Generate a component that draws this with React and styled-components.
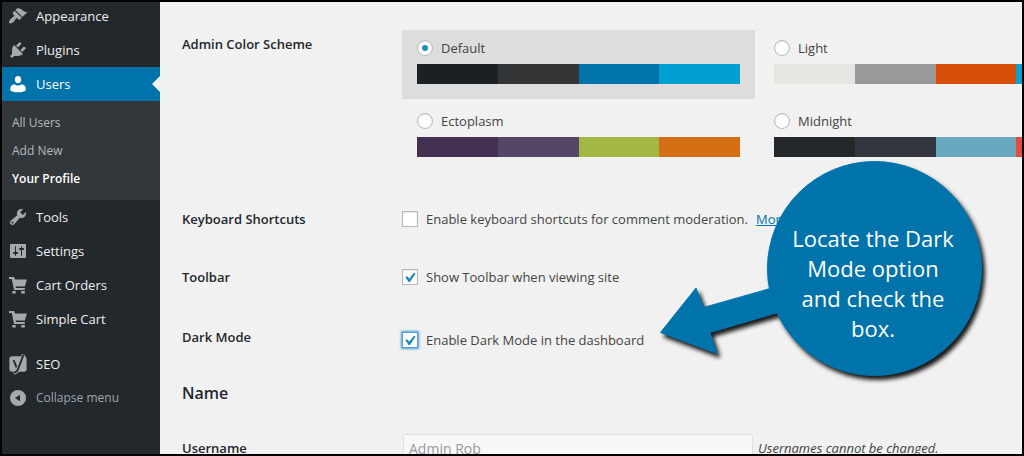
import React from "react";
import styled, { createGlobalStyle, css } from "styled-components";

const GlobalStyle = createGlobalStyle`
  *, *::before, *::after { box-sizing: border-box; }
  body {
    margin: 0;
    background: #f1f1f1;
    color: #444;
    font: 13px/18px "Open Sans", "Noto Sans", sans-serif;
  }
`;

const Frame = styled.div`
  display: flex;
  height: 100vh;
  border: 2px solid #000;
  overflow: hidden;
`;

const Sidebar = styled.nav`
  flex: 0 0 158px;
  background: #23282d;
`;

/* The menu is scrolled, so its first row starts above the frame. */
const Menu = styled.ul`
  margin: -3px 0 0;
  padding: 0;
  list-style: none;
`;

const MenuItem = styled.li`
  margin-top: ${(p) => (p.$separated ? "11px" : "0")};
`;

const MenuLink = styled.a`
  position: relative;
  display: flex;
  align-items: center;
  gap: 8px;
  height: 34px;
  padding-left: 6px;
  font-size: 13px;
  color: ${(p) => (p.$current ? "#fff" : "#eee")};
  background: ${(p) => (p.$current ? "#0073aa" : "transparent")};
  text-decoration: none;

  svg { fill: ${(p) => (p.$current ? "#fff" : "#a5a8ac")}; }

  ${(p) =>
    p.$current &&
    css`
      &::after {
        content: "";
        position: absolute;
        right: 0;
        top: 9px;
        border: 8px solid transparent;
        border-left: 0;
        border-right-color: #f1f1f1;
      }
    `}
`;

const CollapseButton = styled.button`
  display: flex;
  align-items: center;
  gap: 8px;
  width: 100%;
  height: 34px;
  padding: 0 0 0 6px;
  border: 0;
  background: none;
  color: #a0a5aa;
  font: inherit;
  font-size: 12px;
  svg { fill: #a5a8ac; }
`;

const Submenu = styled.ul`
  margin: 0;
  padding: 8px 0 7px;
  list-style: none;
  background: #32373c;
`;

const SubmenuLink = styled.a`
  display: block;
  padding: 5px 10px;
  font-size: 12px;
  line-height: 18px;
  color: ${(p) => (p.$current ? "#fff" : "#b4b9be")};
  font-weight: ${(p) => (p.$current ? 600 : 400)};
  text-decoration: none;
`;

const Main = styled.main`
  position: relative;
  flex: 1;
  min-width: 0;
  padding: 13px 0 0 22px;
  overflow: hidden;
`;

const Row = styled.div`
  display: grid;
  grid-template-columns: 220px 1fr;
  min-height: ${(p) => p.$height || "58px"};
`;

const RowTitle = styled.div`
  padding-top: 20px;
  color: #23282d;
  font-weight: 600;
`;

const SchemeGrid = styled.div`
  display: grid;
  grid-template-columns: repeat(2, 353px);
  gap: 4px;
  padding: 15px 0 18px;
`;

const SchemeOption = styled.label`
  display: block;
  height: 69px;
  padding: 9px 15px 0;
  background: ${(p) => (p.$selected ? "#ddd" : "transparent")};
`;

const SchemeName = styled.span`
  display: flex;
  align-items: center;
  gap: 8px;
  height: 18px;
`;

const Palette = styled.span`
  display: flex;
  height: 20px;
  margin-top: 7px;
`;

const Swatch = styled.span`
  flex: 1;
  background: ${(p) => p.$color};
`;

const Radio = styled.input.attrs({ type: "radio" })`
  appearance: none;
  display: grid;
  place-items: center;
  flex: none;
  width: 16px;
  height: 16px;
  margin: 0;
  border: 1px solid #b4b9be;
  border-radius: 50%;
  background: #fff;
  box-shadow: inset 0 1px 2px rgba(0, 0, 0, 0.1);
  &:checked::before {
    content: "";
    width: 6px;
    height: 6px;
    border-radius: 50%;
    background: #1e8cbe;
  }
`;

const CheckLabel = styled.label`
  display: flex;
  align-items: center;
  gap: 8px;
`;

const Field = styled.div`
  display: flex;
  align-items: center;
  gap: 8px;
  height: ${(p) => (p.$tall ? "24px" : "18px")};
  margin-top: 20px;
  white-space: nowrap;
`;

const Checkbox = styled.input.attrs({ type: "checkbox" })`
  appearance: none;
  display: block;
  flex: none;
  width: 16px;
  height: 16px;
  margin: 0;
  border: 1px solid ${(p) => (p.$focused ? "#5b9dd9" : "#b4b9be")};
  background: #fff;
  box-shadow: ${(p) =>
    p.$focused
      ? "0 0 2px 1px rgba(30, 140, 190, 0.8)"
      : "inset 0 1px 2px rgba(0, 0, 0, 0.1)"};
  &:checked::before {
    content: "";
    display: block;
    width: 14px;
    height: 14px;
    background: #1e8cbe;
    clip-path: polygon(79% 18%, 89% 26%, 50% 86%, 40% 86%, 18% 54%, 28% 43%, 45% 61%);
  }
`;

const MoreLink = styled.a`
  color: #0073aa;
`;

const SectionTitle = styled.h2`
  margin: 11px 0 16px;
  color: #23282d;
  font-size: 16px;
  line-height: 20px;
  font-weight: 600;
`;

const TextRow = styled.div`
  display: flex;
  align-items: center;
  gap: 5px;
  height: 28px;
  margin: 15px 0 0 1px;
`;

const TextInput = styled.input`
  width: 350px;
  height: 28px;
  padding: 3px 5px;
  border: 1px solid #e0e0e0;
  background: #f8f8f8;
  color: #989a9c;
  font: inherit;
  font-size: 14px;
`;

const Hint = styled.em`
  white-space: nowrap;
`;

/* Annotation that floats over the form. */
const Callout = styled.aside`
  position: absolute;
  left: 490px;
  top: 148px;
  width: 350px;
  height: 240px;
`;

const CalloutShape = styled.svg`
  display: block;
  filter: drop-shadow(3px 4px 2px rgba(0, 0, 0, 0.9));
`;

const CalloutText = styled.p`
  position: absolute;
  left: 138px;
  top: 73px;
  width: 170px;
  margin: 0;
  color: #fff;
  font-size: 22px;
  line-height: 30px;
  text-align: center;
`;

const paths = {
  appearance:
    "M14.48 11.06L7.41 3.99l1.5-1.5c.5-.56 2.3-.47 3.51.32 1.21.8 1.43 1.28 2.91 2.1 1.18.64 2.45 1.26 4.45.85zm-.71.71L6.7 4.7 4.93 6.47c-.39.39-.39 1.02 0 1.41l1.06 1.06c.39.39.39 1.03 0 1.42-.6.6-1.43 1.11-2.21 1.69-.35.26-.7.53-1.01.84C1.43 14.23.4 16.08 1.4 17.07c.99 1 2.84-.03 4.18-1.36.31-.31.58-.66.85-1.02.57-.78 1.08-1.61 1.69-2.21.39-.39 1.02-.39 1.41 0l1.06 1.06c.39.39 1.02.39 1.41 0z",
  plugins:
    "M13.11 4.36L9.87 7.6 8 5.73l3.24-3.24c.35-.34 1.05-.2 1.56.32.52.51.66 1.21.31 1.55zm-8 1.77l.91-1.12 9.01 9.01-1.19.84c-.71.71-2.63 1.16-3.82 1.16H6.14L4.9 17.26c-.59.59-1.54.59-2.12 0-.59-.58-.59-1.53 0-2.12l1.24-1.24v-3.88c0-1.13.4-3.19 1.09-3.89zm7.26 3.97l3.24-3.24c.34-.35 1.04-.21 1.55.31.52.51.66 1.21.31 1.55l-3.24 3.25z",
  users:
    "M10 9.300c-2.300 0-3.200-2-3.200-4C6.800 3.200 8.100 1.900 10 1.900s3.200 1.300 3.200 3.400c0 2-.9 4-3.200 4zM6.600 10.200c1 .9 2.100 1.300 3.400 1.300s2.400-.4 3.400-1.300c2.600.2 4.300 1.900 4.300 4.100v2.100c-2 1.300-4.700 1.900-7.700 1.900s-5.700-.6-7.700-1.900v-2.100c0-2.200 1.700-3.900 4.300-4.100z",
  tools:
    "M16.68 9.77c-1.34 1.34-3.3 1.67-4.95.99l-5.41 6.52c-.99.99-2.59.99-3.58 0s-.99-2.59 0-3.57l6.52-5.42c-.68-1.65-.35-3.61.99-4.95 1.28-1.28 3.12-1.62 4.72-1.06l-2.89 2.89 2.82 2.82 2.86-2.87c.53 1.58.18 3.39-1.08 4.65zM3.81 16.21c.4.39 1.04.39 1.43 0 .4-.4.4-1.04 0-1.43-.39-.4-1.03-.4-1.43 0-.39.39-.39 1.03 0 1.43z",
  settings:
    "M18 16V4c0-.55-.45-1-1-1H3c-.55 0-1 .45-1 1v12c0 .55.45 1 1 1h14c.55 0 1-.45 1-1zM8 11h1c.55 0 1 .45 1 1s-.45 1-1 1H8v1.5c0 .28-.22.5-.5.5s-.5-.22-.5-.5V13H6c-.55 0-1-.45-1-1s.45-1 1-1h1V5.5c0-.28.22-.5.5-.5s.5.22.5.5V11zm5-2h-1c-.55 0-1-.45-1-1s.45-1 1-1h1V5.5c0-.28.22-.5.5-.5s.5.22.5.5V7h1c.55 0 1 .45 1 1s-.45 1-1 1h-1v5.5c0 .28-.22.5-.5.5s-.5-.22-.5-.5V9z",
  cart:
    "M1 2h5.200l.8 2.600H19l-2.200 6.900H7.600l.4 1.400h8.800V15H6L3.800 4H1zM4.300 16h3.400v2.600H4.300zM13.200 16h3.600v2.600h-3.600z",
  collapse:
    "M10 2a8 8 0 1 1 0 16 8 8 0 0 1 0-16zM12 6.800L7 10l5 3.200z",
};

function Icon({ name }) {
  return (
    <svg width="20" height="20" viewBox="0 0 20 20" aria-hidden="true">
      <path d={paths[name]} fillRule="evenodd" />
    </svg>
  );
}

function SeoIcon() {
  return (
    <svg width="20" height="20" viewBox="0 0 20 20" overflow="visible" aria-hidden="true">
      <rect x="1.400" y="2.300" width="17.200" height="15.400" rx="2.600" />
      <path d="M15.600.6L10.300 15c-.9 2.500-2.200 3.700-4.600 3.900" fill="none" stroke="#a5a8ac" strokeWidth="3.600" />
      <path
        d="M5.600 6.200l2.900 7.200M15.400 1L10.100 15c-.8 2.200-2 3.300-4 3.500"
        fill="none"
        stroke="#23282d"
        strokeWidth="1.900"
      />
    </svg>
  );
}

const menuTop = [
  { label: "Appearance", icon: "appearance" },
  { label: "Plugins", icon: "plugins" },
];
const submenu = ["All Users", "Add New", "Your Profile"];
const menuBottom = [
  { label: "Tools", icon: "tools" },
  { label: "Settings", icon: "settings" },
  { label: "Cart Orders", icon: "cart" },
  { label: "Simple Cart", icon: "cart" },
];
const schemes = [
  { name: "Default", colors: ["#1c2023", "#333436", "#0073aa", "#00a0d2"] },
  { name: "Light", colors: ["#e5e5e2", "#999", "#d64e07", "#04a4cc"] },
  { name: "Ectoplasm", colors: ["#443152", "#544667", "#a3b745", "#d46f15"] },
  { name: "Midnight", colors: ["#25282b", "#33363f", "#69a8bf", "#e14d43"] },
];

function MenuEntry({ label, icon }) {
  return (
    <MenuItem>
      <MenuLink href="#">
        <Icon name={icon} />
        {label}
      </MenuLink>
    </MenuItem>
  );
}

export default function App() {
  return (
    <>
      <GlobalStyle />
      <Frame>
        <Sidebar aria-label="Main menu">
          <Menu>
            {menuTop.map((m) => (
              <MenuEntry key={m.label} {...m} />
            ))}
            <MenuItem>
              <MenuLink href="#" $current>
                <Icon name="users" />
                Users
              </MenuLink>
              <Submenu>
                {submenu.map((s) => (
                  <li key={s}>
                    <SubmenuLink href="#" $current={s === "Your Profile"}>
                      {s}
                    </SubmenuLink>
                  </li>
                ))}
              </Submenu>
            </MenuItem>
            {menuBottom.map((m) => (
              <MenuEntry key={m.label} {...m} />
            ))}
            <MenuItem $separated>
              <MenuLink href="#">
                <SeoIcon />
                SEO
              </MenuLink>
            </MenuItem>
            <MenuItem>
              <CollapseButton type="button">
                <Icon name="collapse" />
                Collapse menu
              </CollapseButton>
            </MenuItem>
          </Menu>
        </Sidebar>
        <Main>
          <Row $height="175px">
            <RowTitle id="scheme-title">Admin Color Scheme</RowTitle>
            <SchemeGrid role="radiogroup" aria-labelledby="scheme-title">
              {schemes.map((s) => (
                <SchemeOption key={s.name} $selected={s.name === "Default"}>
                  <SchemeName>
                    <Radio name="scheme" defaultChecked={s.name === "Default"} />
                    {s.name}
                  </SchemeName>
                  <Palette>
                    {s.colors.map((c) => (
                      <Swatch key={c} $color={c} />
                    ))}
                  </Palette>
                </SchemeOption>
              ))}
            </SchemeGrid>
          </Row>
          <Row>
            <RowTitle>Keyboard Shortcuts</RowTitle>
            <Field>
              <CheckLabel>
                <Checkbox />
                Enable keyboard shortcuts for comment moderation.
              </CheckLabel>
              <MoreLink href="#">More information</MoreLink>
            </Field>
          </Row>
          <Row $height="60px">
            <RowTitle>Toolbar</RowTitle>
            <Field>
              <CheckLabel>
                <Checkbox defaultChecked />
                Show Toolbar when viewing site
              </CheckLabel>
            </Field>
          </Row>
          <Row $height="64px">
            <RowTitle>Dark Mode</RowTitle>
            <Field $tall>
              <CheckLabel>
                <Checkbox defaultChecked $focused />
                Enable Dark Mode in the dashboard
              </CheckLabel>
            </Field>
          </Row>
          <SectionTitle>Name</SectionTitle>
          <Row>
            <RowTitle as="label" htmlFor="username">
              Username
            </RowTitle>
            <TextRow>
              <TextInput id="username" type="text" defaultValue="Admin Rob" disabled />
              <Hint>Usernames cannot be changed.</Hint>
            </TextRow>
          </Row>
          <Callout>
            <CalloutShape width="350" height="240" viewBox="650 150 350 240" aria-hidden="true">
              <g fill="#0073aa" stroke="#0073aa" strokeLinejoin="round">
                <circle cx="874.500" cy="268.500" r="107" />
                <path d="M660.500 332.500L696 288l7.500 19.500L772 288l8 24-70 20.500 7 21z" />
              </g>
            </CalloutShape>
            <CalloutText>Locate the Dark Mode option and check the box.</CalloutText>
          </Callout>
        </Main>
      </Frame>
    </>
  );
}
